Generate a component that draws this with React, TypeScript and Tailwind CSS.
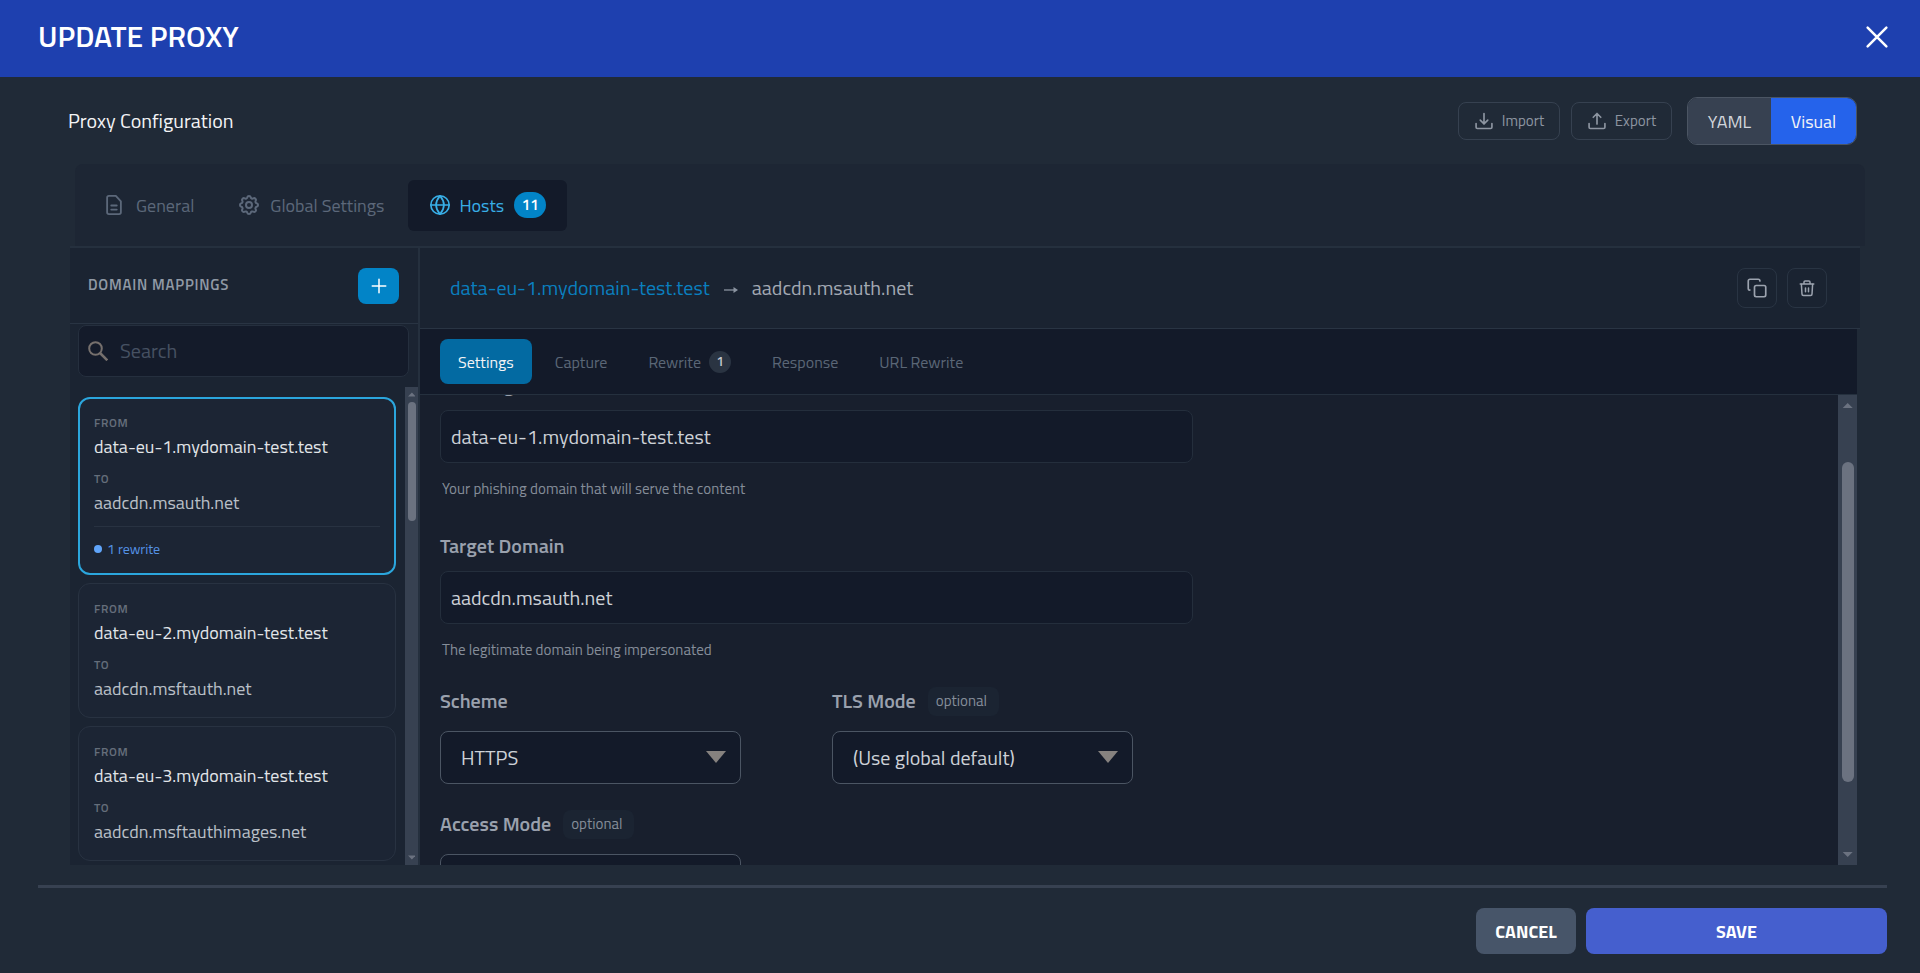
import { FormEvent, ReactNode, useState } from "react";
import { clsx } from "clsx";

const font = "font-['Titillium_Web','Roboto','Noto_Sans',sans-serif]";

const mappings = [
  { from: "data-eu-1.mydomain-test.test", to: "aadcdn.msauth.net", rewrites: 1 },
  { from: "data-eu-2.mydomain-test.test", to: "aadcdn.msftauth.net", rewrites: 0 },
  { from: "data-eu-3.mydomain-test.test", to: "aadcdn.msftauthimages.net", rewrites: 0 },
];

const detailTabs = [
  { label: "Settings" },
  { label: "Capture" },
  { label: "Rewrite", count: 1 },
  { label: "Response" },
  { label: "URL Rewrite" },
];

const Icon = ({ className, children }: { className: string; children: ReactNode }) => (
  <svg
    viewBox="0 0 24 24"
    fill="none"
    stroke="currentColor"
    strokeWidth="2"
    strokeLinecap="round"
    strokeLinejoin="round"
    aria-hidden="true"
    className={clsx("shrink-0", className)}
  >
    {children}
  </svg>
);

const GEAR =
  "M10.3 4.3c.4-1.8 3-1.8 3.4 0a1.7 1.7 0 0 0 2.6 1.1c1.5-.9 3.3.8 2.4 2.4a1.7 1.7 0 0 0 1 2.5c1.8.4 1.8 3 0 3.4a1.7 1.7 0 0 0-1 2.6c.9 1.5-.9 3.3-2.4 2.4a1.7 1.7 0 0 0-2.6 1c-.4 1.8-3 1.8-3.4 0a1.7 1.7 0 0 0-2.6-1c-1.5.9-3.3-.9-2.4-2.4a1.7 1.7 0 0 0-1-2.6c-1.8-.4-1.8-3 0-3.4a1.7 1.7 0 0 0 1-2.5c-.9-1.6.9-3.3 2.4-2.4 1 .6 2.3.1 2.6-1.1z";

const ScrollArrow = ({ down }: { down?: boolean }) => (
  <svg viewBox="0 0 12 6" aria-hidden="true" className="h-[5px] w-[60%] fill-[#6b7280]">
    <path d={down ? "M0 0h12L6 6z" : "M0 6h12L6 0z"} />
  </svg>
);

const Header = () => (
  <header className="flex h-[77px] items-center justify-between bg-[#1e40af] pr-[28px] pb-1 pl-[38px]">
    <h1 className="text-[30px] font-semibold text-white">UPDATE PROXY</h1>
    <button type="button" aria-label="Close" className="text-white">
      <Icon className="size-[30px]">
        <path d="M4.500 4.500l15 15M19.500 4.500l-15 15" />
      </Icon>
    </button>
  </header>
);

const Toolbar = () => (
  <div className="flex items-center justify-between pr-[63px] pl-[68px]">
    <h2 className="text-xl text-[#f3f4f6]">Proxy Configuration</h2>
    <div className="flex items-center gap-[11px] text-[#8d95a1]">
      <button
        type="button"
        className="flex h-[38px] w-[102px] items-center justify-center gap-2 rounded-lg border border-[#364150] text-[15px]"
      >
        <Icon className="size-5">
          <path d="M2.500 15v4.500a1.500 1.500 0 0 0 1.500 1.500h16a1.500 1.500 0 0 0 1.500-1.500V15M12 3v12.500M7.500 11l4.500 4.500 4.500-4.500" />
        </Icon>
        Import
      </button>
      <button
        type="button"
        className="flex h-[38px] w-[101px] items-center justify-center gap-2 rounded-lg border border-[#364150] text-[15px]"
      >
        <Icon className="size-5">
          <path d="M2.500 15v4.500a1.500 1.500 0 0 0 1.500 1.500h16a1.500 1.500 0 0 0 1.500-1.500V15M12 15.500V3M7.500 7.500L12 3l4.500 4.500" />
        </Icon>
        Export
      </button>
      <div className="ml-1 flex h-12 overflow-hidden rounded-[10px] border border-[#4b5563] text-[18px]">
        <button type="button" className="w-[83px] bg-[#374151] text-[#d1d5db]">
          YAML
        </button>
        <button type="button" className="w-[85px] bg-[#2563eb] text-[#f3f4f6]">
          Visual
        </button>
      </div>
    </div>
  </div>
);

const MainTabs = () => (
  <nav className="ml-[5px] flex h-[82px] items-center rounded-t-lg bg-[#1d2634] px-3 text-[18px] text-[#5c687a]">
    <button type="button" className="flex h-[51px] items-center gap-[11px] px-4">
      <Icon className="size-[22px]">
        <path d="M4.500 4a2 2 0 0 1 2-2H14l5.500 6v12a2 2 0 0 1-2 2h-11a2 2 0 0 1-2-2zM9 12.500h6M9 17h6" />
      </Icon>
      General
    </button>
    <button type="button" className="ml-[11px] flex h-[51px] items-center gap-[9px] px-4">
      <Icon className="size-6">
        <path d={GEAR} />
        <circle cx="12" cy="12" r="3" />
      </Icon>
      Global Settings
    </button>
    <button
      type="button"
      className="ml-2 flex h-[51px] w-[159px] items-center justify-center gap-[10px] rounded-md bg-[#131a29] text-[#38aee6]"
    >
      <Icon className="size-5">
        <circle cx="12" cy="12" r="11" />
        <path d="M1 12h22M12 1c-6 7-6 15 0 22M12 1c6 7 6 15 0 22" />
      </Icon>
      Hosts
      <span className="flex h-[26px] w-8 items-center justify-center rounded-full bg-[#0284c7] text-[15px] font-semibold text-white">
        11
      </span>
    </button>
  </nav>
);

const Sidebar = () => {
  const [selected, setSelected] = useState(0);
  return (
    <aside className="flex w-[350px] shrink-0 flex-col border-r-2 border-[#25303e] bg-[#1b2432]">
      <div className="flex h-[76px] shrink-0 items-center justify-between border-b border-[#293443] pr-[19px] pl-[18px]">
        <h3 className="text-[15px] font-semibold tracking-wider text-[#9099a5]">DOMAIN MAPPINGS</h3>
        <button
          type="button"
          aria-label="Add mapping"
          className="flex h-9 w-[41px] items-center justify-center rounded-lg bg-[#0284c7] text-white"
        >
          <Icon className="size-[18px]">
            <path d="M12 3v18M3 12h18" />
          </Icon>
        </button>
      </div>
      <label className="mt-px mr-[9px] ml-2 flex h-[52px] shrink-0 items-center gap-3 rounded-lg border border-[#252f3e] bg-[#141b2a] px-[9px]">
        <svg
          viewBox="0 0 20 20"
          fill="none"
          stroke="#76706d"
          strokeWidth="2"
          aria-hidden="true"
          className="size-5 shrink-0"
        >
          <circle cx="7.500" cy="7.500" r="6.300" />
          <path d="M12 12l7.300 7.300" strokeWidth="2.500" />
        </svg>
        <input
          type="text"
          aria-label="Search"
          placeholder="Search"
          className="min-w-0 flex-1 bg-transparent text-[20px] text-[#d1d5db] outline-none placeholder:text-[#465162]"
        />
      </label>
      <div className="mt-[10px] flex min-h-0 flex-1">
        <div className="flex min-w-0 flex-1 flex-col gap-2 overflow-hidden pt-[10px] pr-[9px] pl-2">
          {mappings.map((mapping, index) => (
            <button
              key={mapping.from}
              type="button"
              onClick={() => setSelected(index)}
              className={clsx(
                "flex shrink-0 flex-col rounded-xl bg-[#1c2534] text-left",
                index === selected
                  ? "border-2 border-[#2ba6dd] px-[14px] pt-[14px] pb-3"
                  : "border border-[#283241] px-[15px] pt-[15px] pb-[14px]",
              )}
            >
              <span className="text-[12px] leading-5 font-semibold tracking-wider text-[#656e7b]">FROM</span>
              <span className="text-[18px] leading-7 text-[#e2e5e9]">{mapping.from}</span>
              <span className="mt-2 text-[12px] leading-5 font-semibold tracking-wider text-[#656e7b]">TO</span>
              <span className="text-[18px] leading-7 text-[#bac0c8]">{mapping.to}</span>
              {mapping.rewrites > 0 && (
                <span className="mt-[9px] flex items-center gap-[5px] self-stretch border-t border-[#283241] pt-[10px] text-[14px] leading-6 text-[#5593e6]">
                  <span className="size-2 rounded-full bg-[#60a5fa]" />
                  {mapping.rewrites} rewrite
                </span>
              )}
            </button>
          ))}
        </div>
        <div className="flex w-[13px] flex-col items-center bg-[#374151] py-[5px]">
          <ScrollArrow />
          <div className="mt-[5px] h-[119px] w-2 rounded-full bg-[#6b7280]" />
          <div className="flex-1" />
          <ScrollArrow down />
        </div>
      </div>
    </aside>
  );
};

const DetailHeader = () => (
  <div className="-mr-[3px] flex h-[81px] shrink-0 items-center justify-between border-b border-[#293443] bg-[#1a2331] pr-[33px] pl-[30px]">
    <div className="flex items-center gap-[14px] text-[20px]">
      <a href="#domain" className="text-[#0a7fbf]">
        data-eu-1.mydomain-test.test
      </a>
      <svg viewBox="0 0 14 8" aria-hidden="true" className="mt-1 h-2 w-[14px] text-[#8a93a0]">
        <path d="M0 4h12" stroke="currentColor" strokeWidth="1.300" />
        <path d="M9.500 1L14 4l-4.500 3z" fill="currentColor" />
      </svg>
      <span className="text-[#a3a9b3]">aadcdn.msauth.net</span>
    </div>
    <div className="flex gap-[10px] text-[#9ca3af]">
      <button
        type="button"
        aria-label="Duplicate"
        className="flex size-10 items-center justify-center rounded-lg border border-[#293443]"
      >
        <Icon className="size-5">
          <rect x="9" y="9" width="13.500" height="13.500" rx="2" />
          <path d="M3.500 14.500a2 2 0 0 1-2-2v-9a2 2 0 0 1 2-2h10a2 2 0 0 1 2 2" />
        </Icon>
      </button>
      <button
        type="button"
        aria-label="Delete"
        className="flex size-10 items-center justify-center rounded-lg border border-[#293443]"
      >
        <Icon className="size-[18px]">
          <path d="M3 6.500h18M4.500 6.500l.800 13.500a2 2 0 0 0 2 2h9.400a2 2 0 0 0 2-2l.800-13.500M8 6.500V4a1.500 1.500 0 0 1 1.500-1.500h5A1.500 1.500 0 0 1 16 4v2.500M10 12v5M14 12v5" />
        </Icon>
      </button>
    </div>
  </div>
);

const DetailTabs = () => (
  <nav className="flex h-[66px] shrink-0 items-center gap-[5px] border-b border-[#25303e] bg-[#131a29] pl-5 text-[16px] text-[#5b6777]">
    {detailTabs.map((tab, index) => (
      <button
        key={tab.label}
        type="button"
        className={clsx(
          "flex h-[45px] items-center gap-2 rounded-lg px-[18px]",
          index === 0 && "bg-[#036aa2] text-[#f3f4f6]",
        )}
      >
        {tab.label}
        {tab.count && (
          <span className="flex size-[22px] items-center justify-center rounded-full bg-[#2a3442] text-[13px] font-semibold text-[#c3c8cf]">
            {tab.count}
          </span>
        )}
      </button>
    ))}
  </nav>
);

interface FieldProps {
  id: string;
  label: string;
  value: string;
}

const TextField = ({ id, label, value, help }: FieldProps & { help: string }) => (
  <div className="flex flex-col">
    <label htmlFor={id} className="text-[20px] leading-[30px] font-semibold text-[#9aa1ad]">
      {label}
    </label>
    <input
      id={id}
      type="text"
      defaultValue={value}
      className="mt-[10px] h-[53px] w-[753px] rounded-lg border border-[#242e3c] bg-[#131a29] px-[10px] text-[20px] text-[#cdd1d7] outline-none"
    />
    <p className="mt-[14px] pl-[2px] text-[15px] leading-6 text-[#858d99]">{help}</p>
  </div>
);

const SelectField = ({ id, label, value, optional }: FieldProps & { optional?: boolean }) => (
  <div className="w-[301px]">
    <div className="flex h-[30px] items-center gap-3">
      <label htmlFor={id} className="text-[20px] font-semibold text-[#9aa1ad]">
        {label}
      </label>
      {optional && (
        <span className="flex h-[29px] items-center rounded-lg bg-[#1b2432] pr-3 pl-2 text-[15px] text-[#858d99]">
          optional
        </span>
      )}
    </div>
    <div className="relative mt-[15px]">
      <select
        id={id}
        className="h-[53px] w-full appearance-none rounded-lg border border-[#4b5563] bg-[#131a29] px-5 text-[20px] text-[#cdd1d7] outline-none"
      >
        <option>{value}</option>
      </select>
      <svg
        viewBox="0 0 20 12"
        aria-hidden="true"
        className="pointer-events-none absolute top-5 right-[15px] h-3 w-5 fill-[#86827f]"
      >
        <path d="M0 0h20L10 12z" />
      </svg>
    </div>
  </div>
);

const Settings = () => (
  <div className="flex min-h-0 flex-1 bg-[#181f2d]">
    <div className="min-w-0 flex-1 overflow-hidden pl-5">
      <div className="-mt-[25px] flex flex-col">
        <TextField
          id="phishing"
          label="Phishing Domain"
          value="data-eu-1.mydomain-test.test"
          help="Your phishing domain that will serve the content"
        />
        <div className="mt-[30px]">
          <TextField
            id="target"
            label="Target Domain"
            value="aadcdn.msauth.net"
            help="The legitimate domain being impersonated"
          />
        </div>
        <div className="mt-[24px] flex flex-wrap gap-x-[91px] gap-y-[25px]">
          <SelectField id="scheme" label="Scheme" value="HTTPS" />
          <SelectField id="tls" label="TLS Mode" value="(Use global default)" optional />
          <div className="w-full">
            <SelectField id="access" label="Access Mode" value="(Use global default)" optional />
          </div>
        </div>
      </div>
    </div>
    <div className="flex w-[19px] flex-col items-center bg-[#374151] py-2">
      <ScrollArrow />
      <div className="flex-[54]" />
      <div className="w-3 flex-[319] rounded-full bg-[#6b7280]" />
      <div className="flex-[70]" />
      <ScrollArrow down />
    </div>
  </div>
);

const App = () => {
  const handleSubmit = (event: FormEvent) => event.preventDefault();
  return (
    <form onSubmit={handleSubmit} className={clsx("flex h-screen flex-col bg-[#202a37]", font)}>
      <Header />
      <main className="flex min-h-0 flex-1 flex-col pt-5">
        <Toolbar />
        <div className="mt-[19px] mr-[60px] ml-[70px] flex min-h-0 flex-1 flex-col">
          <div className="-mr-[5px]">
            <MainTabs />
          </div>
          <section className="mr-[3px] flex min-h-0 flex-1 flex-col">
            <div className="-mr-[3px] h-[2px] shrink-0 bg-[#25303e]" />
            <div className="flex min-h-0 flex-1">
              <Sidebar />
              <div className="flex min-w-0 flex-1 flex-col">
                <DetailHeader />
                <DetailTabs />
                <Settings />
              </div>
            </div>
          </section>
        </div>
      </main>
      <footer className="mr-[33px] ml-[38px] mt-5 flex justify-end gap-[10px] border-t-[3px] border-[#374151] pt-5 pb-[19px] text-[18px] font-bold text-white">
        <button type="button" className="h-[46px] w-[100px] rounded-lg bg-[#475569]">
          CANCEL
        </button>
        <button type="submit" className="h-[46px] w-[301px] rounded-lg bg-[#455fce]">
          SAVE
        </button>
      </footer>
    </form>
  );
};

export default App;
